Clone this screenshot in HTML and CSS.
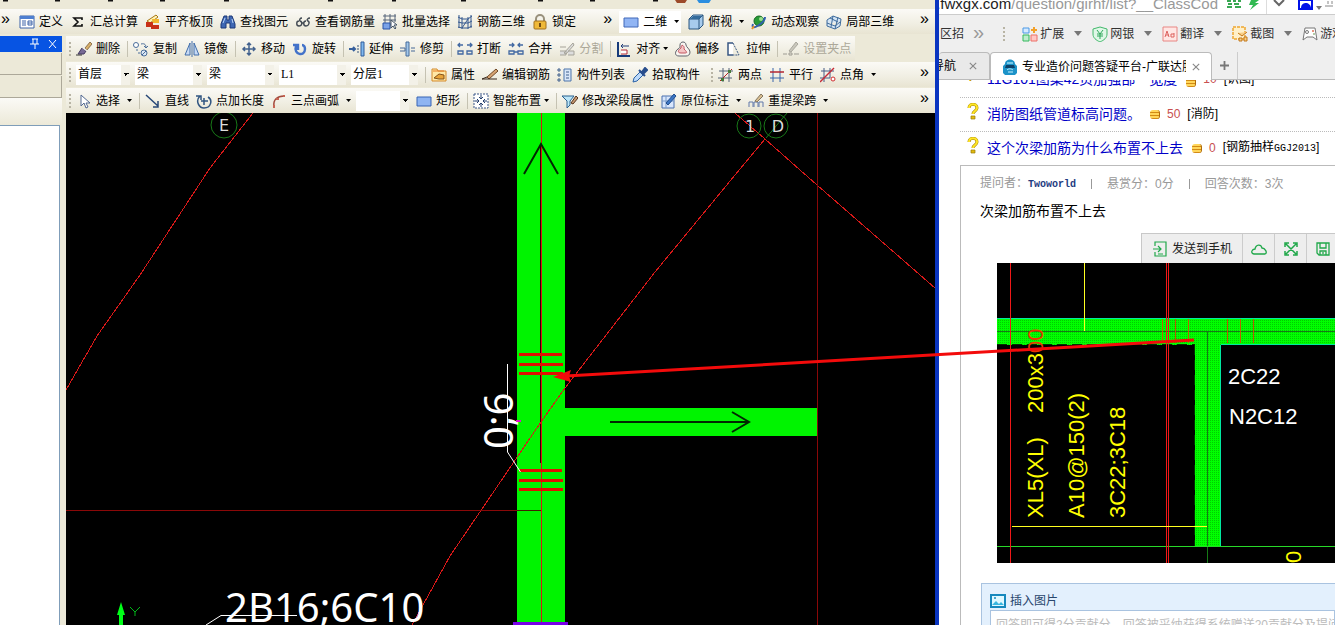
FILE: index.html
```html
<!DOCTYPE html>
<html lang="zh-CN">
<head>
<meta charset="utf-8">
<title>专业造价问题答疑平台</title>
<link rel="stylesheet" href="styles.css">
</head>
<body>
<div class="desktop">
<section class="cad">
  <svg class="menu-edge" viewBox="0 0 935 9" preserveAspectRatio="xMinYMin slice" aria-hidden="true">
    <path d="M3 0h5M55 0h5M108 0h5M160 0h5M224 0h5M328 0h5M392 0h4M461 0h5M538 0h5M590 0h5M653 0h5" stroke="#111" stroke-width="3"/>
    <path d="M675 0h12l-2 3h-8z" fill="#9c4a2a"/><path d="M697 0h14l-2 3h-10z" fill="#2b8ee0"/>
  </svg>

  <div class="bar bar-top">
    <span class="more">»</span>
    <button class="tool"><svg viewBox="0 0 16 16"><path d="M1 2h14v12H1z" fill="#fff" stroke="#3c62a8"/><path d="M1 2h14v3H1z" fill="#4f7fd0"/><path d="M3 7h4M3 9h4M3 11h4M9 7h4v4H9zM9 9h4" stroke="#3c62a8" fill="none"/></svg>定义</button>
    <button class="tool"><svg viewBox="0 0 16 16"><path d="M12 6V4H4l4 4-4 4h8v-2" fill="none" stroke="#111" stroke-width="1.6"/></svg>汇总计算</button>
    <button class="tool"><svg viewBox="0 0 16 16"><path d="M2 7l9-6 2 2-8 6z" fill="#fff3b5" stroke="#a87615"/><path d="M1 8h7v3h6v4H6v-2H1z" fill="#c83016"/><path d="M7 5h7v4H8z" fill="#f2b62c"/></svg>平齐板顶</button>
    <button class="tool"><svg viewBox="0 0 16 16"><path d="M4 2h3v4h2V2h3l3 8v4h-5V9H6v5H1v-4z" fill="#3f68b4" stroke="#1d3978"/><path d="M3 9l2-5M12 5l1 4" stroke="#b9d5fa"/></svg>查找图元</button>
    <button class="tool"><svg viewBox="0 0 16 16"><path d="M4 7C1 7 1 12 4 12s4-4 1-5c-1-1 0-3 2-3M11 7c-3 0-3 5 0 5s4-4 2-5 0-3 2-3M7 9h2" fill="none" stroke="#424a53" stroke-width="1.4"/></svg>查看钢筋量</button>
    <button class="tool"><svg viewBox="0 0 16 16"><path d="M1 2h13M1 6h13M1 11h8M3 0v15M8 0v11M13 0v8" stroke="#56657a" fill="none"/><path d="M1 9h7v6H1z" fill="#7aa2e8" stroke="#2852a6"/><path d="M9 6v8l2-2 2 3 1-1-2-3h3z" fill="#fff" stroke="#456"/></svg>批量选择</button>
    <button class="tool"><svg viewBox="0 0 16 16"><path d="M1 3l4 2h6l4-3M1 8l4 1h6l4-2M1 13l4 1h6l4-2M2 1v13M5 3v12M11 3v12M14 1v13M5 14l6-9" stroke="#35588f" fill="none"/></svg>钢筋三维</button>
    <button class="tool"><svg viewBox="0 0 16 16"><path d="M4 8V5a4 4 0 0 1 8 0v3" fill="none" stroke="#98907c" stroke-width="2"/><rect x="2" y="7" width="12" height="8" rx="1" fill="#efb938" stroke="#a2701b"/><path d="M8 9v4" stroke="#704b12" stroke-width="2"/></svg>锁定</button>
    <span class="more more-mid">»</span>
    <span class="view-pick"><button class="tool"><svg viewBox="0 0 16 16"><path d="M1 4h14v9H1z" fill="#91b5f4" stroke="#4169b8"/></svg>二维<i class="caret"></i></button></span>
    <button class="tool"><svg viewBox="0 0 16 16"><path d="M1 5l4-4h10v10l-4 4H1z" fill="#a7cbed" stroke="#28557f"/><path d="M1 5h10v10M11 5l4-4" fill="none" stroke="#28557f"/><path d="M2 5l3-3h9l-3 3z" fill="#356c9c"/></svg>俯视<i class="caret"></i></button>
    <button class="tool"><svg viewBox="0 0 16 16"><circle cx="8" cy="7" r="5" fill="#299b37" stroke="#176724"/><circle cx="10" cy="5" r="2" fill="#99df8d"/><path d="M2 10c-3 8 12-1 12-7" fill="none" stroke="#315fae" stroke-width="2"/><path d="M3 12l-2 3" stroke="#e4912b" stroke-width="2"/></svg>动态观察</button>
    <button class="tool"><svg viewBox="0 0 16 16"><path d="M1 6l6-4 8 3-1 7-5 3-8-3zM1 9l8 3 5-4M4 4l8 4M7 2L5 13M12 3l-3 12" fill="#d4e5f5" stroke="#3e6b9c"/></svg>局部三维</button>
    <span class="more more-end">»</span>
  </div>

  <div class="cad-body">
    <aside class="dock">
      <div class="dock-title"><svg viewBox="0 0 28 12"><path d="M3 1h6M4 1v5M8 1v5M1 6h9M6 6v5M20 2l7 8M27 2l-7 8" stroke="#fff" fill="none"/></svg></div>
      <div class="dock-row"></div><div class="dock-row"></div><div class="dock-gap"></div><div class="dock-list"></div>
    </aside>
    <div class="work">
      <div class="bar bar-short">
        <i class="grip"></i>
        <button class="tool"><svg viewBox="0 0 16 16"><path d="M9 7l5-6 2 2-5 6z" fill="#d8b06a" stroke="#684a2b" stroke-width=".7"/><path d="M6 7l4 3-2 3H2z" fill="#776995" stroke="#453b60"/><path d="M7 6l4 3-1 1-4-3z" fill="#eee"/><path d="M0 14h6" stroke="#333"/></svg>删除</button><i class="sep"></i>
        <button class="tool"><svg viewBox="0 0 16 16"><circle cx="3" cy="4" r="2.500" fill="#fff" stroke="#4b6e9a"/><circle cx="11" cy="12" r="3" fill="#dce8f5" stroke="#4b6e9a"/><path d="M8 3c4-1 5 1 5 4M11 5l2 2 2-2M5 12h2M4 8v2M9 14l4-4" fill="none" stroke="#4b6e9a"/></svg>复制</button>
        <button class="tool"><svg viewBox="0 0 16 16"><path d="M6 2v12H1zM10 2v12h5z" fill="#c7daf5" stroke="#426eaa"/><path d="M8 0v16" stroke="#426eaa"/></svg>镜像</button><i class="sep"></i>
        <button class="tool"><svg viewBox="0 0 16 16"><path d="M8 2v12M2 8h12M6 4l2-2 2 2M6 12l2 2 2-2M4 6L2 8l2 2M12 6l2 2-2 2" fill="none" stroke="#42618e" stroke-width="1.5"/></svg>移动</button>
        <button class="tool"><svg viewBox="0 0 16 16"><path d="M4 5c-3 9 9 11 9 3 0-2-1-4-3-4M1 4h5v5" fill="none" stroke="#4372c9" stroke-width="2.4"/></svg>旋转</button><i class="sep"></i>
        <button class="tool"><svg viewBox="0 0 16 16"><path d="M0 8h6M4 6l2 2-2 2" fill="none" stroke="#365f9d" stroke-width="2"/><path d="M8 5h2M8 8h2M8 11h2" stroke="#36557b"/><path d="M12 1h3v14h-3z" fill="#80b8ee" stroke="#315d9b"/></svg>延伸</button>
        <button class="tool"><svg viewBox="0 0 16 16"><path d="M0 7h5v3H0M11 7h4M11 10h4" fill="none" stroke="#466998"/><path d="M6 1h3v14H6z" fill="#a3c7ea" stroke="#446b9a"/></svg>修剪</button><i class="sep"></i>
        <button class="tool"><svg viewBox="0 0 16 16"><path d="M1 4h5M3 2L1 4l2 2M10 4h5M13 2l2 2-2 2M1 10h5v3H1zM15 10h-5v3h5z" fill="none" stroke="#4168a2" stroke-width="1.3"/></svg>打断</button>
        <button class="tool"><svg viewBox="0 0 16 16"><path d="M1 4h5M4 2l2 2-2 2M10 4h5M12 2l-2 2 2 2M1 10h5v3H1zM15 10h-5v3h5zM6 11h4" fill="none" stroke="#4168a2" stroke-width="1.3"/></svg>合并</button>
        <button class="tool off" disabled><svg viewBox="0 0 16 16"><path d="M1 6h6M1 10h6v4H1M9 10h6v4H9M5 12l9-10 1 2-8 9z" fill="#ddd" stroke="#a5a399"/></svg>分割</button><i class="sep"></i>
        <button class="tool near"><svg viewBox="0 0 16 16"><path d="M2 1v14h12" fill="none" stroke="#173b7b" stroke-width="2"/><path d="M5 5h8M7 3L5 5l2 2" stroke="#213d79" fill="none"/><path d="M5 9h6v4H5" fill="#fff" stroke="#b42a37"/></svg>对齐<i class="caret"></i></button>
        <button class="tool"><svg viewBox="0 0 16 16"><path d="M5 4c0-4 6-4 6 0 0 2 4 4 4 7 0 3-2 4-4 4H4c-5 0-4-5-1-7 2-1 2-2 2-4z" fill="#f8f4f0" stroke="#61656d"/><path d="M6 7c0-5 4-2 3 1 4 4 3 4 0 4H6c-4 0-3-3 0-5z" fill="#f4c4c4" stroke="#c25461"/></svg>偏移</button>
        <button class="tool"><svg viewBox="0 0 16 16"><path d="M7 2H2v12h5" fill="#fff" stroke="#385782" stroke-width="1.5"/><path d="M7 2l6 12H7" fill="none" stroke="#385782" stroke-dasharray="2 1"/></svg>拉伸</button><i class="sep"></i>
        <button class="tool off" disabled><svg viewBox="0 0 16 16"><path d="M6 10l7-9 2 2-7 8z" fill="#c9c7bc" stroke="#aaa89e"/><path d="M0 13h4M6 12h3v2H6zM11 13h5" stroke="#9d9b92" fill="none"/></svg>设置夹点</button>
      </div>
      <div class="bar bar-combos">
        <i class="grip"></i>
        <div class="combos">
          <select class="combo small" aria-label="楼层"><option>首层</option></select>
          <select class="combo" aria-label="构件类型"><option>梁</option></select>
          <select class="combo" aria-label="构件"><option>梁</option></select>
          <select class="combo latin" aria-label="构件名称"><option>L1</option></select>
          <select class="combo latin" aria-label="分层"><option>分层1</option></select>
        </div><i class="sep"></i>
        <button class="tool"><svg viewBox="0 0 16 16"><path d="M1 2h5l1 2h8v10H1z" fill="#ffe8a6" stroke="#d48a2d"/><path d="M3 11l5-4 5 1v4H8z" fill="#e8a43a" stroke="#84531b"/><path d="M2 4h11" stroke="#e77c27"/></svg>属性</button>
        <button class="tool"><svg viewBox="0 0 16 16"><path d="M5 10l9-8 2 2-9 8z" fill="#d6a372" stroke="#714927"/><path d="M0 12h15M0 12l5-2" stroke="#362518" fill="none"/></svg>编辑钢筋</button>
        <button class="tool"><svg viewBox="0 0 16 16"><path d="M7 2h7v12H7z" fill="#d8e6f8" stroke="#4d74aa"/><path d="M9 5h3M9 8h3M9 11h3M1 2h2v2H1zM1 7h2v2H1zM1 12h2v2H1z" fill="none" stroke="#3f5f8c"/></svg>构件列表</button>
        <button class="tool"><svg viewBox="0 0 16 16"><path d="M1 15l1-4 6-6 3 3-6 6z" fill="#bddafa" stroke="#2b62a6"/><path d="M7 3l6 6M10 5l3-4 2 2-4 4" fill="#294e8d" stroke="#294e8d" stroke-width="2"/></svg>拾取构件</button>
        <i class="grip grip-mid"></i>
        <button class="tool"><svg viewBox="0 0 16 16"><path d="M1 4h14M0 11h14M5 1v14M11 1v14" stroke="#56657a"/><path d="M2 14L14 2" stroke="#b42323"/><path d="M3 11h3v3H3zM10 3h3v3h-3z" fill="#467939"/></svg>两点</button>
        <button class="tool"><svg viewBox="0 0 16 16"><path d="M4 1v14M11 1v14M1 11h14" stroke="#3965aa"/><path d="M1 5h14" stroke="#b32632" stroke-width="1.5"/></svg>平行</button>
        <button class="tool"><svg viewBox="0 0 16 16"><path d="M1 4h13M0 11h10M4 1v14M10 1v10" stroke="#465d86"/><path d="M0 15L14 1" stroke="#c52b37" stroke-width="1.5"/><circle cx="13" cy="12" r="2" fill="#fff" stroke="#d02e32"/></svg>点角<i class="caret"></i></button>
        <span class="more more-end">»</span>
      </div>
      <div class="bar">
        <i class="grip"></i>
        <button class="tool"><svg viewBox="0 0 16 16"><path d="M5 2v11l3-3 2 5 2-1-2-4h4z" fill="#fff" stroke="#526891"/></svg>选择<i class="caret"></i></button><i class="sep"></i>
        <button class="tool"><svg viewBox="0 0 16 16"><path d="M1 2l12 11M13 8v6H8" fill="none" stroke="#274777" stroke-width="1.5"/></svg>直线</button>
        <button class="tool"><svg viewBox="0 0 16 16"><path d="M4 3c-5 5-1 12 4 12 7 0 9-8 4-11M0 3h5v4M8 5v7M5 8h7" fill="none" stroke="#315581" stroke-width="1.5"/></svg>点加长度</button>
        <button class="tool"><svg viewBox="0 0 16 16"><path d="M3 13C2 7 6 3 13 3" fill="none" stroke="#a34b3e" stroke-width="1.5"/><path d="M2 12h2v3H2zM5 5h3v2H5zM12 2h2v2h-2z" fill="#c76453"/></svg>三点画弧<i class="caret"></i></button>
        <select class="combo arc" aria-label="半径"><option></option></select>
        <button class="tool"><svg viewBox="0 0 16 16"><path d="M1 4h14v9H1z" fill="#8eb4f2" stroke="#3864b4"/></svg>矩形</button><i class="sep"></i>
        <button class="tool near"><svg viewBox="0 0 16 16"><path d="M1 1h14v14H1z" fill="#fff" stroke="#3a5688" stroke-dasharray="2 1"/><path d="M8 2v4M6 4l2 2 2-2M8 14v-4M6 12l2-2 2 2M2 8h4M4 6l2 2-2 2M14 8h-4M12 6l-2 2 2 2" stroke="#243f6d" fill="none"/></svg>智能布置<i class="caret"></i></button><i class="sep"></i>
        <button class="tool"><svg viewBox="0 0 16 16"><path d="M0 3h12L8 8v4l-3 3V8z" fill="#bce5f7" stroke="#28608e"/><path d="M9 10l5-7 2 2-5 6z" fill="#c99b72" stroke="#53331e"/></svg>修改梁段属性</button>
        <button class="tool"><svg viewBox="0 0 16 16"><path d="M1 3h12v12H1z" fill="#d8e6fc" stroke="#4b70b0"/><path d="M1 8h12M5 3v12" stroke="#799ac9"/><path d="M5 10l8-9 2 2-8 9z" fill="#3c76c4" stroke="#204d8d"/></svg>原位标注<i class="caret"></i></button>
        <button class="tool"><svg viewBox="0 0 16 16"><path d="M1 14v-5h4v5M6 14v-5h4v5M11 14v-5h4v5" fill="none" stroke="#6179aa"/><path d="M7 8l6-7 2 2-6 6z" fill="#d9be91" stroke="#82765f"/></svg>重提梁跨<i class="caret"></i></button>
        <span class="more more-end">»</span>
      </div>

      <svg class="canvas" viewBox="66 113 869 512" preserveAspectRatio="xMinYMin slice">
        <path d="M66 113h869v512H66z"/>
        <path class="beam" d="M517 113h48v295h252v28H565v189h-48z"/>
        <path d="M540.500 145v318" stroke="#300000"/>
        <g class="axis">
          <path shape-rendering="crispEdges" d="M253 113L210 168 140 275 97 336 66 390M735 113L765 139 817 185 935 288M765 139L740 169 655 272 565 388 541 422 450 556 412 625"/>
          <path d="M817.500 113V625M66 510.500H517" class="dim"/>
          <path d="M541.500 113V625"/>
        </g>
        <path d="M517 510.500h24" stroke="#402000"/>
        <path d="M524 174l17-30 17 30M610 422h138M732 412l17 10-17 10" fill="none" stroke="#002800" stroke-width="2"/>
        <path d="M519 354.500h43M519 364.500h44M519 373.500h44M519 470.500h43M519 480.500h44M519 489.500h44" stroke="#e01000" stroke-width="3"/>
        <path d="M513 623.500h55" stroke="#7800e8" stroke-width="3"/>
        <g fill="none" stroke="#187818"><circle cx="224" cy="125" r="13"/><circle cx="749" cy="126" r="12"/><circle cx="776" cy="126" r="12"/><path d="M766 138l21-25"/></g>
        <g class="bubble"><text x="224" y="131">E</text><text x="750" y="132">1</text><text x="778" y="132">D</text></g>
        <g class="rebar"><text x="225" y="622">2B16;6C10</text><text transform="translate(513 449) rotate(-90)">0;6</text></g>
        <path d="M507.500 364V452l13 20M206 625l15-9.500h76" fill="none" stroke="#fff"/>
        <path d="M516 421h5" stroke="#e010d0" stroke-width="2"/>
        <path d="M121 602l4 13h-8zM119 615h4v10h-4z" fill="#00ff18"/><path d="M130 607l5 5 5-5M135 612v4" fill="none" stroke="#00b818"/>
      </svg>
    </div>
  </div>
</section>

<section class="web">
  <div class="address"><span class="url"><b>w.fwxgx.com</b>/question/girhf/list?__ClassCod</span>
    <svg viewBox="0 0 108 14"><path d="M0 1h4M6 1h3M11 1h3M1 4h4M7 4h5M0 7h5M8 7h6" stroke="#39a853" stroke-width="2"/><path d="M24 0h8l-4 3h4l-9 7 3-5h-4z" fill="#31ba52"/><path d="M39.500 0v14" stroke="#ddd"/><path d="M47 0l5 5 5-5" fill="none" stroke="#666" stroke-width="2"/><path d="M72 0h13v9H72z" fill="#fff" stroke="#0011e8" stroke-width="2"/><path d="M74 8c0-4 3-5 5-5s5 2 5 5z" fill="#0011e8"/><path d="M89 6h6l-3 4z" fill="#777"/><path d="M98 6h8M101 1v3M105 1v3" stroke="#888"/></svg>
  </div>
  <nav class="favs">
    <a href="#">区招</a><span class="chev">»</span><i class="grip"></i>
    <button class="fav"><svg viewBox="0 0 16 16"><path d="M1 2h6v5H1z" fill="#d6eaff" stroke="#4a99e6"/><path d="M1 9h6v6H1z" fill="#bfeccf" stroke="#35b95c"/><path d="M9 9h6v6H9z" fill="#ffc8c5" stroke="#ed7069"/><path d="M12 1v6M9 4h6" stroke="#f2a12b" stroke-width="2"/></svg>扩展<i class="drop"></i></button>
    <button class="fav"><svg viewBox="0 0 16 16"><path d="M8 1l7 2v5c0 4-3 6-7 8-4-2-7-4-7-8V3z" fill="#dff7e7" stroke="#42b96b"/><path d="M5 4l3 4 3-4M8 8v5M5 8h6M5 10h6" fill="none" stroke="#31a75c"/></svg>网银<i class="drop"></i></button>
    <button class="fav"><svg viewBox="0 0 16 16"><path d="M1 1h14v14H1z" fill="#ffe6e4" stroke="#e88683"/><path d="M3 11l2-6 2 6M4 9h3M12 7v4H9V8h3" fill="none" stroke="#dc625f"/></svg>翻译<i class="drop"></i></button>
    <button class="fav"><svg viewBox="0 0 16 16"><path d="M1 1h12v12H1z" fill="#fff0c9" stroke="#eea630" stroke-width="1.5" stroke-dasharray="3 1"/><path d="M6 7l4 3 5-4M7 12h3v3H7zM12 11h3v4h-3z" fill="#f8ce85" stroke="#c3781b"/></svg>截图<i class="drop"></i></button>
    <button class="fav"><svg viewBox="0 0 16 16"><path d="M3 2h10l2 12-4-3H5l-4 3z" fill="#fff" stroke="#777"/><circle cx="5" cy="6" r="1.500" fill="none" stroke="#777"/><circle cx="11" cy="5" r="1" fill="#e07055"/><circle cx="12" cy="8" r="1" fill="#9b8"/></svg>游戏</button>
  </nav>
  <div class="tabs">
    <div class="tab old"><span>导航</span><button class="close" aria-label="关闭"><svg viewBox="0 0 10 10"><path d="M1 1l8 8M9 1L1 9" stroke="#888" stroke-width="1.4"/></svg></button></div>
    <div class="tab active"><svg viewBox="0 0 16 16"><path d="M3 5c0-6 10-6 10 0l2 2v7l-2 2H3l-2-2V7z" fill="#1d93c8"/><path d="M4 6h8l1 3H3z" fill="#0c4168"/><path d="M5 3h6v2H5z" fill="#76c8e8"/><path d="M5 11c2-2 5-1 6 0M6 13h5" stroke="#c8f1ff" fill="none"/></svg><span class="tab-name">专业造价问题答疑平台-广联达服务</span><button class="close" aria-label="关闭"><svg viewBox="0 0 10 10"><path d="M1 1l8 8M9 1L1 9" stroke="#888" stroke-width="1.4"/></svg></button></div>
    <button class="plus" aria-label="新标签"><svg viewBox="0 0 10 10"><path d="M5 0v10M0 5h10" stroke="#777" stroke-width="2"/></svg></button>
  </div>
  <main class="page">
    <div class="question cut"><span class="q">?</span><a href="#">11G101图集42页加强部一宽度</a><i class="coin"></i><b>10</b><span class="tag">[识图]</span></div>
    <div class="question"><svg class="q" viewBox="0 0 12 18"><path d="M2 5c0-5 8-5 8 0 0 3-4 3-4 6" fill="none" stroke="#a48605" stroke-width="3"/><path d="M2 5c0-5 8-5 8 0 0 3-4 3-4 6" fill="none" stroke="#ffe526" stroke-width="2"/><path d="M4 13h4v3H4z" fill="#e4bc0e" stroke="#967909" stroke-width=".7"/></svg><a href="#">消防图纸管道标高问题。</a><i class="coin"></i><b>50</b><span class="tag">[消防]</span></div>
    <div class="question"><svg class="q" viewBox="0 0 12 18"><path d="M2 5c0-5 8-5 8 0 0 3-4 3-4 6" fill="none" stroke="#a48605" stroke-width="3"/><path d="M2 5c0-5 8-5 8 0 0 3-4 3-4 6" fill="none" stroke="#ffe526" stroke-width="2"/><path d="M4 13h4v3H4z" fill="#e4bc0e" stroke="#967909" stroke-width=".7"/></svg><a href="#">这个次梁加筋为什么布置不上去</a><i class="coin"></i><b>0</b><span class="tag">[钢筋抽样<span class="mono">GGJ2013</span>]</span></div>
    <article class="detail">
      <p class="meta"><span>提问者：<a class="mono" href="#">Twoworld</a></span><i></i><span>悬赏分：0分</span><i></i><span>回答次数：3次</span></p>
      <p class="body-text">次梁加筋布置不上去</p>
      <div class="share">
        <button class="send"><svg viewBox="0 0 16 16"><path d="M3 5V1h11v14H3v-4M1 8h8M6 5l3 3-3 3M6 13h5" fill="none" stroke="#20a84a" stroke-width="1.2"/></svg>发送到手机</button>
        <button aria-label="云"><svg viewBox="0 0 16 16"><path d="M3 13c-4-1-2-5 1-5 1-5 6-5 7-1 3 0 6 5 3 6z" fill="none" stroke="#20a84a" stroke-width="1.3"/></svg></button>
        <button aria-label="放大"><svg viewBox="0 0 16 16"><path d="M3 3l10 10M13 3L3 13M2 6V2h4M10 2h4v4M14 10v4h-4M6 14H2v-4" fill="none" stroke="#20a84a" stroke-width="1.5"/></svg></button>
        <button aria-label="保存"><svg viewBox="0 0 16 16"><path d="M2 2h12v12H4l-2-2zM5 2v5h6V2M5 14v-4h6v4M8 11v2" fill="none" stroke="#20a84a" stroke-width="1.3"/></svg></button>
      </div>
      <svg class="shot" viewBox="997 263 338 300">
        <defs><pattern id="mesh" width="2" height="2" patternUnits="userSpaceOnUse"><path d="M0 0h2v2H0z" fill="#00ff00"/><path d="M0 0h1v1H0z" fill="#00cc00"/></pattern></defs>
        <path d="M997 263h338v300H997z"/>
        <path d="M997 318h338v27h-114v201h-26V345H997z" fill="url(#mesh)"/>
        <path d="M997 318.500h338M1221 344.500h114M1220.500 345v201" stroke="#00e8a0" fill="none"/>
        <path d="M997 331.500h338M1207.500 331v232" stroke="#167a16"/>
        <path d="M997 546.500h338" stroke="#28d828"/>
        <path d="M997 344.500h198M1194.500 345v201" stroke="#003000" stroke-dasharray="10 5"/>
        <path d="M1010.500 263v300M1166.500 263v300M1168.500 263v300" stroke="#f01818"/>
        <path d="M1162.500 319v24M1175.500 319v24M1188.500 319v24M1227.500 319v24M1240.500 319v24M1253.500 319v24" stroke="#b86000"/>
        <path d="M1084.500 263v68M1012 526.500h195" stroke="#ffff20"/>
        <g class="mark"><text transform="translate(1043 518) rotate(-90)">XL5(XL)</text><text transform="translate(1043 413) rotate(-90)">200x3<tspan fill="#e83800">00</tspan></text><text transform="translate(1084 518) rotate(-90)">A10@150(2)</text><text transform="translate(1125 518) rotate(-90)">3C22;3C18</text><text transform="translate(1301 563) rotate(-90)">0</text></g>
        <g class="mark white"><text x="1228" y="384">2C22</text><text x="1229" y="424">N2C12</text></g>
      </svg>
      <form class="reply">
        <button type="button" class="insert"><svg viewBox="0 0 16 16"><path d="M1 2h14v12H1z" fill="#dff8ff" stroke="#1688bd" stroke-width="2"/><path d="M2 12l4-4 3 3 2-2 3 3z" fill="#38b6df"/><circle cx="5" cy="5" r="1" fill="#1688bd"/></svg>插入图片</button>
        <textarea aria-label="回答" placeholder="回答即可得2分贡献分，回答被采纳获得系统赠送20贡献分及提问者悬赏分"></textarea>
      </form>
    </article>
  </main>
</section>

<svg class="pointer" viewBox="0 0 1335 625" preserveAspectRatio="xMinYMin slice" aria-hidden="true"><path d="M1194 340L566 376" stroke="#f30b0b" stroke-width="3"/><path d="M553 377l18-7-2 6 2 6z" fill="#f30b0b"/></svg>
</div>
</body>
</html>
```
FILE: styles.css
```css
* { box-sizing: border-box; }
body { margin: 0; font: 12px/16px "Liberation Sans", "Noto Sans CJK SC", sans-serif; color: #000; }
button { margin: 0; padding: 0; border: 0; background: none; font: inherit; color: inherit; }
a { color: inherit; text-decoration: none; }
p { margin: 0; }
.desktop { position: relative; display: flex; height: 100vh; overflow: hidden; }

.cad { flex: 935 1 0; min-width: 0; display: flex; flex-direction: column; background: #ece9d8; border-right: 4px solid #0a35c0; overflow: hidden; }
.menu-edge { display: block; height: 9px; width: 100%; flex: none; }
.bar { display: flex; align-items: center; gap: 7px; height: 25px; padding: 0 4px 0 3px; background: linear-gradient(#fbfaf6, #f0eee2 60%, #e8e4d2); white-space: nowrap; overflow: hidden; flex: none; }
.bar-top { padding-left: 1px; margin-bottom: 2px; }
.bar-short { align-self: flex-start; }
.tool { display: flex; align-items: center; gap: 4px; flex: none; height: 22px; }
.tool svg, .fav svg, .active > svg, .share svg, .insert svg { width: 16px; height: 16px; flex: none; }
.off { color: #aca899; }
.caret { width: 5px; height: 3px; margin-left: 3px; flex: none; background: #000; clip-path: polygon(0 0, 100% 0, 50% 100%); }
.near .caret { margin-left: -1px; }
.sep { width: 1px; height: 16px; margin-right: -2px; flex: none; background: #c5c2b2; }
.grip { width: 2px; height: 14px; margin-right: -2px; flex: none; background: repeating-linear-gradient(#b8b4a4 0 2px, transparent 2px 4px); }
.more { flex: none; width: 11px; height: 22px; font-size: 16px; line-height: 16px; }
.more-mid { margin-left: 20px; }
.more-end { margin-left: auto; }
.view-pick { display: flex; background: #fff; padding: 0 2px 0 4px; margin-left: -2px; }
.cad-body { flex: 1; min-height: 0; display: flex; gap: 4px; }
.dock { width: 62px; flex: none; display: flex; flex-direction: column; }
.dock-title { height: 16px; background: #0754e3; display: flex; justify-content: flex-end; padding: 2px 5px; }
.dock-title svg { width: 28px; height: 12px; }
.dock-row { height: 22px; margin-top: 1px; background: #ece9d8; border: solid #aca899; border-width: 0 1px 1px 0; }
.dock-gap { height: 27px; background: linear-gradient(#fbfaf6, #ece9d8); }
.dock-list { flex: 1; width: 60px; background: #fff; border: solid #7f9db9; border-width: 1px 1px 0 0; }
.work { flex: 1; min-width: 0; display: flex; flex-direction: column; }
.work .bar { margin-bottom: 1px; }
.work .bar:nth-child(3) { margin-bottom: 0; }
.combos { display: flex; gap: 5px; }
.combo { appearance: none; width: 67px; height: 20px; border: 0; border-radius: 0; padding: 0 12px 2px 2px; font: inherit; color: #000; background: conic-gradient(from 315deg at 50% 100%, #000 90deg, transparent 0) right 1px center / 6px 3px no-repeat, linear-gradient(#f3f1e8, #f3f1e8) right / 9px 100% no-repeat, #fff; }
.combo.small { width: 54px; }
.combo.arc { width: 53px; margin-left: -2px; }
.combo.latin { font-family: "Liberation Serif", "Noto Sans CJK SC", serif; }
.grip-mid { margin-left: 4px; }
.canvas { display: block; width: 100%; flex: 1; min-height: 0; background: #000; }
.beam { fill: #00f400; }
.axis { fill: none; stroke: #d81818; }
.axis .dim { stroke: #8a0808; }
.bubble { font: 16px "DejaVu Sans", sans-serif; fill: #ddd; text-anchor: middle; }
.rebar { font: 40px "Noto Sans", sans-serif; fill: #fff; }

.web { flex: 396 1 0; min-width: 0; display: flex; flex-direction: column; background: #fff; overflow: hidden; white-space: nowrap; }
.address { display: flex; align-items: flex-start; height: 15px; flex: none; overflow: hidden; border-bottom: 1px solid #ccc; }
.url { flex: 1; min-width: 0; display: flex; justify-content: flex-end; overflow: hidden; padding-right: 9px; font-size: 15px; line-height: 18px; margin-top: -5px; color: #999; }
.url b { font-weight: normal; color: #222; }
.address svg { width: 108px; height: 14px; flex: none; }
.favs { display: flex; align-items: center; height: 37px; flex: none; padding-left: 1px; background: #efefef; color: #333; overflow: hidden; }
.favs .grip { margin: 0 17px 0 19px; }
.chev { width: 12px; height: 18px; margin-left: 9px; font-size: 20px; line-height: 14px; color: #999; }
.fav { display: flex; align-items: center; gap: 2px; flex: none; width: 70px; }
.drop { margin-left: 8px; border: 4px solid transparent; border-top: 5px solid #777; border-bottom: 0; }
.tabs { display: flex; height: 28px; flex: none; background: #efefef; border-bottom: 1px solid #bbb; }
.tab { display: flex; align-items: center; border: 1px solid #bbb; border-bottom: 0; border-radius: 4px 4px 0 0; overflow: hidden; }
.old { width: 51px; flex: none; border-left: 0; padding-right: 12px; justify-content: flex-end; gap: 13px; background: #e9e9e9; }
.active { width: 222px; height: 28px; background: #fff; padding: 0 11px; gap: 4px; }
.tab-name { flex: 1; overflow: hidden; margin-right: 2px; }
.close { width: 8px; flex: none; }
.close svg, .plus svg { display: block; width: 100%; }
.plus { width: 26px; padding: 0 8px; border-right: 1px solid #ccc; }
.page { flex: 1; min-height: 0; margin-left: 21px; overflow: hidden; }
.question { display: flex; align-items: center; height: 34px; padding: 0 0 2px 7px; border-top: 1px dotted #bbb; }
.question a { font-size: 14px; color: #0000c8; }
.question.cut { height: 17px; border: 0; align-items: flex-end; overflow: hidden; padding-bottom: 10px; }
.q { width: 12px; height: 18px; flex: none; margin-right: 8px; margin-bottom: 4px; }
.cut .q { margin-bottom: 0; color: #c90; font-weight: bold; }
.coin { width: 10px; height: 9px; flex: none; margin: 2px 7px 0 9px; border-radius: 3px; background: repeating-linear-gradient(#ffd65a 0 2px, #d28a14 2px 3px); border-right: 1px solid #b06b08; }
.question b { font-weight: normal; color: #c85050; }
.tag { margin-left: 7px; }
.mono { font-family: "Liberation Mono", monospace; font-size: 10px; }
.detail { border: solid #bbb; border-width: 1px 0 0 1px; padding: 8px 0 0 19px; height: 600px; }
.meta { display: flex; align-items: center; gap: 15px; line-height: 18px; color: #999; }
.meta i { width: 1px; height: 10px; background: #999; }
.meta a { color: #233b80; font-weight: bold; }
.body-text { margin-top: 7px; font-size: 14px; line-height: 20px; }
.share { display: flex; height: 30px; margin: 12px 0 0 161px; border: solid #c8c8c8; border-width: 1px 0 0 1px; background: #eee; }
.share button { display: flex; align-items: center; justify-content: center; gap: 4px; width: 32px; flex: none; border-right: 1px solid #ccc; color: #222; }
.share .send { width: 101px; }
.shot { display: block; margin-left: 17px; width: calc(100% - 17px); }
.mark { font: 22px "Liberation Sans", sans-serif; fill: #ffff00; }
.white { fill: #fff; }
.reply { margin: 20px 0 0 1px; height: 80px; padding: 8px 0 0 8px; border: 1px solid #a9c3e0; border-right: 0; background: #e3f0fd; }
.insert { display: flex; align-items: center; gap: 4px; height: 18px; color: #29466c; }
.reply textarea { display: block; width: 100%; height: 50px; border: 1px solid #a9c3e0; border-radius: 0; resize: none; padding: 6px 5px; font: inherit; background: #fff; white-space: nowrap; overflow: hidden; }
.reply textarea::placeholder { color: #bbb; }
.pointer { position: absolute; left: 0; top: 0; width: 100%; height: 100%; pointer-events: none; }
```
